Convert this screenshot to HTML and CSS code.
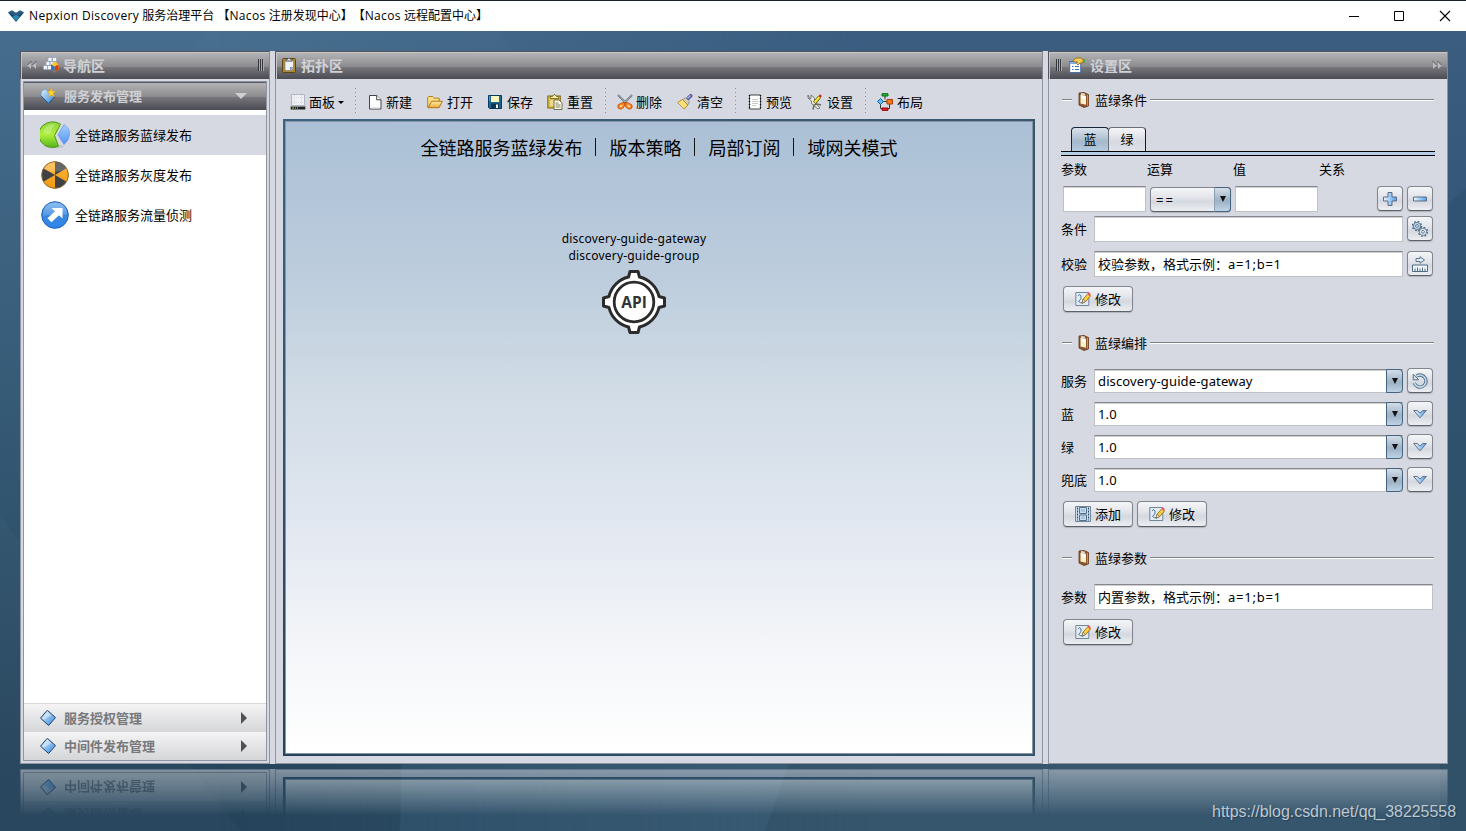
FILE: index.html
```html
<!DOCTYPE html>
<html lang="zh-CN">
<head>
<meta charset="utf-8">
<title>Nepxion Discovery 服务治理平台</title>
<link rel="stylesheet" href="styles.css">
</head>
<body>
<svg class="defs" width="0" height="0" aria-hidden="true">
  <defs>
    <linearGradient id="gBlue" x1="0" y1="0" x2="1" y2="1"><stop offset="0" stop-color="#e4f5ff"/><stop offset="1" stop-color="#2f86dc"/></linearGradient>
    <linearGradient id="gPale" x1="0" y1="0" x2="1" y2="0"><stop offset="0" stop-color="#eef7ff"/><stop offset="1" stop-color="#4f9ff0"/></linearGradient>
    <linearGradient id="gGreen" x1="0" y1="0" x2="0" y2="1"><stop offset="0" stop-color="#8ed33a"/><stop offset=".5" stop-color="#aef03c"/><stop offset="1" stop-color="#56b51c"/></linearGradient>
    <linearGradient id="gSlice" x1="0" y1="0" x2="0" y2="1"><stop offset="0" stop-color="#a9d2ff"/><stop offset="1" stop-color="#4f92f0"/></linearGradient>
    <linearGradient id="gBall" x1="0" y1="0" x2="0" y2="1"><stop offset="0" stop-color="#7db8f0"/><stop offset=".5" stop-color="#3b87de"/><stop offset="1" stop-color="#2f86ee"/></linearGradient>
    <linearGradient id="gGold" x1="0" y1="0" x2="0" y2="1"><stop offset="0" stop-color="#fff0a8"/><stop offset="1" stop-color="#e8a838"/></linearGradient>
    <linearGradient id="gOrange" x1="0" y1="0" x2="0" y2="1"><stop offset="0" stop-color="#ffb640"/><stop offset="1" stop-color="#f09a10"/></linearGradient>
    <symbol id="diamond" viewBox="0 0 16 16"><path d="M7.600.500 15.500 7.600 8.600 15.500.500 8.200 6.200 1.400z" fill="url(#gBlue)" stroke="#20406c" stroke-width="1"/><path d="M7.500 2 2 8l2 1.700L11.500 5z" fill="#fff" opacity=".4"/></symbol>
    <symbol id="star" viewBox="0 0 16 16"><path d="m5 1 3 2 6 5-5.500 7.500L.7 8 1.500 3.500z" fill="url(#gBlue)" stroke="#6f9cc4" stroke-width=".8"/><path d="M.7 7.500 8.500 15.400 15 8.500" fill="none" stroke="#254e86"/><path d="m11 0 1.300 3.200 3.400-.3-2.500 2.400 1.400 3.300-3.200-1.500L8.800 9l.5-3.500L7 3.400l3-.2z" fill="#ffd62e" stroke="#e49b14" stroke-width=".6"/></symbol>
    <symbol id="blocks" viewBox="0 0 16 16"><g fill="#f2f5fa" stroke="#8fa1bb" stroke-width=".7"><path d="M5 .5h4v4H5zM9.500.5h4v4h-4zM3 4.500h4v4H3zM7 4.500h4v4H7zM.5 8.500h4v4h-4zM4.500 8.500h4v4h-4z"/></g><path d="m8 7.500 4-3 3.500 3v5l-4 3-3.500-3z" fill="#ffc42e"/><path d="M11.700 9.500 15.500 7.500v5l-4 3z" fill="#d83c18"/><path d="m8 7.500 3.700 2-.2 6-3.500-3z" fill="#2f74c6"/></symbol>
    <symbol id="clip" viewBox="0 0 16 16"><rect x="1.500" y="1.500" width="13" height="14" rx="1" fill="#b08a32" stroke="#5c440f"/><path d="M4 4h8.500v7L10 13.500H4z" fill="#eef3fb" stroke="#6a7690" stroke-width=".6"/><path d="M12.500 10H9v3.500z" fill="#8595b8"/><path d="M5 4V2.200h1.700Q8-.5 9.300 2.200H11V4z" fill="#dfe3e8" stroke="#454b54" stroke-width=".8"/></symbol>
    <symbol id="props" viewBox="0 0 16 16"><rect x=".7" y="4.500" width="11" height="11" fill="#fff" stroke="#4a72a8"/><path d="M1 5h10.500v2H1z" fill="#7fb0e8"/><path d="M3 9.500h1.500m1.500 0h4M3 12.500h1.500m1.500 0h4" stroke="#3f75b4"/><path d="M3.500 4.200 7 1h5l2 1.500v3.200L11 6 9 8 7.500 6.500 8.500 5 6 5z" fill="#f7cb55" stroke="#8f6314" stroke-width=".8"/><path d="M14 2h2v4h-2z" fill="#54a24a"/></symbol>
    <symbol id="panel" viewBox="0 0 16 16"><path d="M1.500.5h13v11h-13z" fill="#eef0f3" stroke="#b0b5be"/><path d="M4.500 1v10M11.500 1v10M2 3.500h12M2 8.500h12" stroke="#d5d8de" stroke-dasharray="1 1"/><path d="M.7 12h14.600v3.500H.7z" fill="#222"/><path d="M1 12.500h14" stroke="#888"/><path d="M2 14h2" stroke="#9edc1a"/><path d="M5 14h4" stroke="#d0ce4c" stroke-dasharray="1 1"/></symbol>
    <symbol id="new" viewBox="0 0 16 16"><path d="M2.500 1.500h7.200l4.300 4.300v9.200H2.500z" fill="#fcfcfd" stroke="#444" stroke-linejoin="round"/><path d="M9.700 1.500v4.300H14" fill="#fff" stroke="#444"/><path d="M4 14h9" stroke="#d5d7dc"/></symbol>
    <symbol id="open" viewBox="0 0 16 16"><path d="M.7 13.500V3.500l1-1h4l1.500 1.700h5v3.500" fill="#ffdf86" stroke="#bc7b22"/><path d="M1 13.700 4.500 7.200h10.800l-3.200 6.500z" fill="url(#gGold)" stroke="#b57018"/></symbol>
    <symbol id="save" viewBox="0 0 16 16"><path d="M1.500 1.500h13v13h-12l-1-1z" fill="#1d6793" stroke="#073b62"/><path d="M4 2h8v6H4z" fill="#fbf7be"/><path d="M4 9.500h8V14H4z" fill="#0a344f"/><path d="M9 10.500h2V14H9z" fill="#f3f7f8"/><path d="M2.500 2v5" stroke="#3fa1c9"/></symbol>
    <symbol id="paste" viewBox="0 0 16 16"><rect x=".8" y="2" width="12.500" height="12" fill="#d9bd48" stroke="#806615"/><path d="M3.500 4.500V2.500h2L7 .6h1l1.500 1.900h2v2z" fill="#f7f2a6" stroke="#665c1b" stroke-width=".8"/><path d="M3 6h8v6H3z" fill="#ecdb85"/><path d="M7 6h5l3 2.800v6.700H7z" fill="#fffbe5" stroke="#58512f" stroke-width=".8"/><path d="M8.500 9h3m-3 2h5m-5 2h5" stroke="#61604f" stroke-width=".8"/></symbol>
    <symbol id="cut" viewBox="0 0 16 16"><path d="m1 1 10 10M15 1 5 11" stroke="#687681" stroke-width="2"/><path d="m1.500 1 8.500 9M14.500 1 6 10" stroke="#d5dde2" stroke-width=".6"/><path d="M8 8.500 4.500 9 1 11v3l3 1.200 3-2zM8 8.500l3.500.5 3.500 2v3l-3 1.200-3-2z" fill="#ff8b20" stroke="#b94508" stroke-width=".8"/><path d="m3 12.500 2.300-.8m7.700.8-2.300-.8" stroke="#fff" stroke-width="1.200"/></symbol>
    <symbol id="broom" viewBox="0 0 16 16"><path d="m11 4.500 2.700-2.700" stroke="#555a9d" stroke-width="3.600" stroke-linecap="round"/><path d="m10.500 4.500 3-3" stroke="#aab0ea" stroke-width="1.400"/><path d="M5.500 5.800 8.500 3.700l4 4-1.600 3.200z" fill="#d5cfbc" stroke="#777" stroke-width=".7"/><path d="M5.500 5.500.6 8.500l6.600 6.500 3.700-4z" fill="#f8db66" stroke="#a17b23" stroke-width=".8"/><path d="m2 8.500 5 5m-2.500-6.500 4.500 4.500" stroke="#fff7be" stroke-width=".8"/></symbol>
    <symbol id="preview" viewBox="0 0 16 16"><path d="M2.500 1h11v14h-11z" fill="#fff" stroke="#444"/><path d="M2.500 1v14M13.500 1v14" stroke="#111" stroke-width="1.500" stroke-dasharray="1 2"/><path d="M5 5.500h6M5 7.500h6M5 9.500h6M5 11.500h4" stroke="#bbb" stroke-width=".8"/></symbol>
    <symbol id="tools" viewBox="0 0 16 16"><path d="M1 1v3l3.500 3v2.500L11 15l2-1-5.500-6V4L4 1v3L3 5z" fill="#e4e5df" stroke="#63635d" stroke-width=".8"/><path d="m6 15.500 1-4.500 3-1 4 1" fill="none" stroke="#6e6d60" stroke-width="1.500"/><path d="m7.500 8.800 5-6" stroke="#5e5528" stroke-width="3.500"/><path d="m7.700 8.500 5-6" stroke="#ffed28" stroke-width="2"/><path d="m12.300 3 1.700-1.800" stroke="#bc281e" stroke-width="2.500"/></symbol>
    <symbol id="layout" viewBox="0 0 16 18"><path d="M8 3v3.500M3.500 11v4.500h9V11M6 8.500h4" fill="none" stroke="#333"/><path d="M5 .7h6v2.300H5z" fill="#21bc36" stroke="#086d16"/><path d="m3.500 5.500 3 3-3 3-3-3z" fill="#61bbf5" stroke="#1663a9"/><path d="M10 6.500h5.500v4.500H10z" fill="#ff7b18" stroke="#a83c06"/><path d="M5 15h6v2.300H5z" fill="#e92228" stroke="#900"/></symbol>
    <symbol id="book" viewBox="0 0 12 16"><path d="m1 1 5-.5 4.500 2v11.500L6 15.500 1 13z" fill="#8e572c" stroke="#633619" stroke-width=".8"/><path d="m2.500 2.800 5.500 1v9L2.500 11.500z" fill="#fff0c5"/><path d="m3.500 3.500 3.500.7v3L3.500 6z" fill="#fff"/><path d="m3 1 4 .5v2L3 3z" fill="#ddd7cf"/><path d="m9.500 2.800.1 10.900" stroke="#c89564"/></symbol>
    <symbol id="edit" viewBox="0 0 16 16"><path d="M.8 1.500h13v13H.8z" fill="#e1ecf5" stroke="#71879c"/><path d="M3 5q2-3 3 0T3.500 10.500q2 2 5 1" fill="none" stroke="#54779b" stroke-width="1"/><path d="m7 12.300 1-4L13 2.500l2.700 2.300-5.200 6z" fill="#ffcf38" stroke="#8b6520" stroke-width=".8"/><path d="m8.300 8.300 2.300 2L7 12.300z" fill="#fff2c6" stroke="#555" stroke-width=".6"/><path d="m12.300 3 1.500-1.700 2 1.800-1.300 1.800z" fill="#ee5960"/></symbol>
    <symbol id="film" viewBox="0 0 16 16"><path d="M.5.5h15v15H.5z" fill="#c9dceb" stroke="#71879c"/><path d="M2.500 1.500v13M13.500 1.500v13" stroke="#334c66" stroke-dasharray="2 1"/><path d="M4.500 1.500h7v6h-7zM4.500 9h7v5.500h-7z" fill="#c8deef" stroke="#55708a"/><path d="M6 3h4v3H6zM6 10.500h4v2.500H6z" fill="#a5c4de"/></symbol>
    <symbol id="plus" viewBox="0 0 16 16"><path d="M6 1.500h4V6h4.500v4H10v4.500H6V10H1.500V6H6z" fill="url(#gPale)" stroke="#5d6c80"/></symbol>
    <symbol id="minus" viewBox="0 0 16 16"><path d="M1.500 6h13v4h-13z" fill="url(#gPale)" stroke="#5d6c80"/></symbol>
    <symbol id="gears" viewBox="0 0 16 16"><g stroke="#4f6a84"><circle cx="5" cy="5" r="4.500" fill="none" stroke-width="1.400" stroke-dasharray="1.800 1.730"/><circle cx="5" cy="5" r="3.600" fill="#bcd8ee" stroke-width=".8"/><circle cx="5" cy="5" r="1.400" fill="#fff" stroke-width=".9"/><circle cx="11" cy="10.800" r="4.500" fill="none" stroke-width="1.400" stroke-dasharray="1.800 1.730"/><circle cx="11" cy="10.800" r="3.600" fill="#e8eff5" stroke-width=".8"/><circle cx="11" cy="10.800" r="1.400" fill="#fff" stroke-width=".9"/></g></symbol>
    <symbol id="ruler" viewBox="0 0 16 16"><path d="M.5 9h15v6.500H.5z" fill="#eef5fb" stroke="#506b84"/><path d="M3 15v-2.500M5.500 15v-3.500M8 15v-2.500M10.500 15v-3.500M13 15v-2.500" stroke="#506b84"/><path d="M4 2.500h4V.7L12.500 4 8 7.300V5.500H4z" fill="#dcebf5" stroke="#506b84" stroke-width=".9"/></symbol>
    <symbol id="undo" viewBox="0 0 16 16"><path d="M4.500 3.200A6 6 0 1 1 2.300 10" fill="none" stroke="#54708b" stroke-width="3.400"/><path d="M4.500 3.200A6 6 0 1 1 2.300 10" fill="none" stroke="#c5dced" stroke-width="1.600"/><path d="M1.200 1.300v5.500h5.500z" fill="#d7e8f4" stroke="#54708b"/></symbol>
    <symbol id="chev" viewBox="0 0 14 10"><path d="M.7 1.500h3.500L7 4l2.800-2.500h3.500L7 8.800z" fill="url(#gPale)" stroke="#5e7288"/></symbol>
    <symbol id="dbl" viewBox="0 0 10 8"><path d="M1 0v8l4-4zM6 0v8l4-4z" fill="#bdbdc1"/><path d="m.5 0 4 4M5.500 0l4 4" fill="none" stroke="#4d4e55"/></symbol>
  </defs>
</svg>

<header class="titlebar">
  <svg class="logo" viewBox="0 0 16 12"><path d="M0 2.500 4 .5 8 3l4-2.500 4 2L8 12z" fill="#14476b"/><path d="M0 2.500 4 .5 8 3l4-2.500 4 2-8 4z" fill="#2a5c84"/><path d="m4 7 4-2.200L12 7l-4 4z" fill="#2f87ad"/></svg>
  <div class="title"><span class="title-latin">Nepxion Discovery</span> 服务治理平台 【<span>Nacos</span> 注册发现中心】【<span>Nacos</span> 远程配置中心】</div>
  <svg class="winctl" viewBox="0 0 102 12"><path d="M0 6.500h10M45.500 1.500h9v9h-9z" fill="none" stroke="#000"/><path d="m91 1 10 10m0-10-10 10" stroke="#000" stroke-width="1.100"/></svg>
</header>

<main class="desktop">
  <svg class="wall" viewBox="0 31 1466 800" preserveAspectRatio="none">
    <path d="M205 31H498L540 90H170z" fill="#fff" opacity=".015"/>
    <path d="M0 515 240 831H0z" fill="#fff" opacity=".02"/>
    <path d="M402 760H790L765 831H400z" fill="#6f9cc4" opacity=".1"/>
    <path d="M1466 188V831H1440V212z" fill="#0b2b49" opacity=".1"/>
  </svg>
  <div class="frames">
    <section class="frame nav">
      <div class="bar">
        <svg class="dbl flip" viewBox="0 0 10 8"><use href="#dbl"/></svg>
        <svg class="i16"><use href="#blocks"/></svg><b>导航区</b><i class="grip"></i>
      </div>
      <div class="navbox">
        <div class="group on"><svg class="i16"><use href="#star"/></svg><b>服务发布管理</b><i class="down"></i></div>
        <div class="items">
          <div class="item sel"><svg viewBox="0 0 30 28"><ellipse cx="14" cy="25.500" rx="10" ry="2" fill="#9a9ea8" opacity=".3"/><path d="M14.500 14.500 20.500 3.200A13.800 12.800 0 1 0 18.500 25.200z" fill="url(#gGreen)" stroke="#4c9a14"/><path d="M3 11Q5 3 16 2.500q-5 5-5 9-4 3-8-.5" fill="#fff" opacity=".25"/><path d="m18 14 6-10.500Q29.500 7 29.500 13T24 23.500z" fill="url(#gSlice)" stroke="#6d9be4" stroke-width=".8"/></svg>全链路服务蓝绿发布</div>
          <div class="item"><svg viewBox="0 0 30 28"><circle cx="15" cy="14" r="13.500" fill="#404144"/><path d="M15 14 3.300 7.200A13.500 13.500 0 0 1 15 .5zM15 14 26.700 7.200A13.500 13.500 0 0 1 26.700 20.700zM15 14v13.500A13.500 13.500 0 0 1 3.300 20.700z" fill="url(#gOrange)"/><path d="M3 8Q8 1 15 1t12 7q-12 6-24 0" fill="#fff" opacity=".2"/><circle cx="15" cy="14" r="13.300" fill="none" stroke="#8d6a30" stroke-width=".8"/></svg>全链路服务灰度发布</div>
          <div class="item"><svg viewBox="0 0 30 28"><circle cx="15" cy="14" r="13.300" fill="url(#gBall)" stroke="#1e61b8"/><path d="M3 15Q3 2 15 2t12 12Q14 12 3 15" fill="#fff" opacity=".15"/><path d="M11.500 7h11v10.500L19 14.300l-7.500 7-4-4L15 10.200z" fill="#fff"/></svg>全链路服务流量侦测</div>
        </div>
        <div class="group off"><svg class="i16"><use href="#diamond"/></svg><b>服务授权管理</b><i class="right"></i></div>
        <div class="group off"><svg class="i16"><use href="#diamond"/></svg><b>中间件发布管理</b><i class="right"></i></div>
      </div>
    </section>

    <section class="frame topo">
      <div class="bar"><svg class="i16"><use href="#clip"/></svg><b>拓扑区</b></div>
      <div class="toolbar">
        <div class="tool first"><svg><use href="#panel"/></svg><span>面板</span><i class="caret"></i></div>
        <i class="sep"></i>
        <div class="tool"><svg><use href="#new"/></svg><span>新建</span></div>
        <div class="tool wide"><svg><use href="#open"/></svg><span>打开</span></div>
        <div class="tool wide"><svg><use href="#save"/></svg><span>保存</span></div>
        <div class="tool last wide"><svg><use href="#paste"/></svg><span>重置</span></div>
        <i class="sep"></i>
        <div class="tool"><svg><use href="#cut"/></svg><span>删除</span></div>
        <div class="tool last wide"><svg><use href="#broom"/></svg><span>清空</span></div>
        <i class="sep"></i>
        <div class="tool"><svg><use href="#preview"/></svg><span>预览</span></div>
        <div class="tool last wide"><svg><use href="#tools"/></svg><span>设置</span></div>
        <i class="sep"></i>
        <div class="tool last wide"><svg class="tall"><use href="#layout"/></svg><span>布局</span></div>
      </div>
      <div class="canvas-edge"><div class="canvas">
        <div class="heading"><span>全链路服务蓝绿发布</span><i></i><span>版本策略</span><i></i><span>局部订阅</span><i></i><span>域网关模式</span></div>
        <div class="node">
          <div>discovery-guide-gateway</div><div class="grp">discovery-guide-group</div>
          <svg viewBox="0 0 64 64"><path d="M28 1.500h8l1.500 5.500A26 26 0 0 1 57 26.500l5.500 1.500v8L57 37.500A26 26 0 0 1 37.500 57L36 62.500h-8L26.500 57A26 26 0 0 1 7 37.500L1.500 36v-8L7 26.500A26 26 0 0 1 26.500 7z" fill="#fff" stroke="#2b2b2b" stroke-width="3" stroke-linejoin="round"/><circle cx="32" cy="32" r="19.800" fill="#fff" stroke="#2b2b2b" stroke-width="2.800"/><text x="32" y="37.500" text-anchor="middle" class="api">API</text></svg>
        </div>
      </div></div>
    </section>

    <section class="frame conf">
      <div class="bar"><i class="grip"></i><svg class="i16"><use href="#props"/></svg><b>设置区</b><svg class="dbl" viewBox="0 0 10 8"><use href="#dbl"/></svg></div>
      <div class="form">
        <div class="legend"><i class="dash"></i><svg><use href="#book"/></svg><span>蓝绿条件</span><i class="rule"></i></div>
        <div class="tabs"><span class="tab act">蓝</span><span class="tab">绿</span></div>
        <div class="tabline"></div>
        <div class="cols"><span>参数</span><span>运算</span><span>值</span><span>关系</span></div>
        <div class="row r1">
          <div class="input w83"></div>
          <div class="select"><span>==</span><i class="arrow"></i></div>
          <div class="input w83"></div>
          <div class="sq push"><svg><use href="#plus"/></svg></div>
          <div class="sq"><svg><use href="#minus"/></svg></div>
        </div>
        <div class="row r2"><label>条件</label><div class="input"></div><div class="sq"><svg><use href="#gears"/></svg></div></div>
        <div class="row r3"><label>校验</label><div class="input">校验参数，格式示例：<span class="lat">a=1;b=1</span></div><div class="sq"><svg><use href="#ruler"/></svg></div></div>
        <div class="btns"><div class="btn"><svg><use href="#edit"/></svg>修改</div></div>

        <div class="legend l2"><i class="dash"></i><svg><use href="#book"/></svg><span>蓝绿编排</span><i class="rule"></i></div>
        <div class="row c first-c"><label>服务</label><div class="combo"><span class="dg">discovery-guide-gateway</span><i class="arrow"></i></div><div class="sq"><svg><use href="#undo"/></svg></div></div>
        <div class="row c"><label>蓝</label><div class="combo"><span>1.0</span><i class="arrow"></i></div><div class="sq"><svg class="chev"><use href="#chev"/></svg></div></div>
        <div class="row c"><label>绿</label><div class="combo"><span>1.0</span><i class="arrow"></i></div><div class="sq"><svg class="chev"><use href="#chev"/></svg></div></div>
        <div class="row c"><label>兜底</label><div class="combo"><span>1.0</span><i class="arrow"></i></div><div class="sq"><svg class="chev"><use href="#chev"/></svg></div></div>
        <div class="btns b2"><div class="btn"><svg><use href="#film"/></svg>添加</div><div class="btn"><svg><use href="#edit"/></svg>修改</div></div>

        <div class="legend l3"><i class="dash"></i><svg><use href="#book"/></svg><span>蓝绿参数</span><i class="rule"></i></div>
        <div class="row r5"><label>参数</label><div class="input">内置参数，格式示例：<span class="lat">a=1;b=1</span></div></div>
        <div class="btns"><div class="btn"><svg><use href="#edit"/></svg>修改</div></div>
      </div>
    </section>
  </div>

  <div class="mirror" aria-hidden="true">
    <div class="mirror-in">
      <section class="frame nav"><div class="navbox">
        <div class="group off"><svg class="i16"><use href="#diamond"/></svg><b>服务授权管理</b><i class="right"></i></div>
        <div class="group off"><svg class="i16"><use href="#diamond"/></svg><b>中间件发布管理</b><i class="right"></i></div>
      </div></section>
      <section class="frame topo"><div class="canvas-edge"><div class="canvas"></div></div></section>
      <section class="frame conf"></section>
    </div>
  </div>
  <div class="watermark">https://blog.csdn.net/qq_38225558</div>
</main>
</body>
</html>
```

FILE: styles.css
```css
* { box-sizing: border-box; }
html, body { margin: 0; height: 831px; overflow: hidden; }
body {
  display: flex;
  flex-direction: column;
  width: 1466px;
  font: 13px/16px "Noto Sans", "Noto Sans CJK SC", sans-serif;
  color: #000;
}
i { font-style: normal; display: block; flex: none; }
svg { display: block; flex: none; }
.defs { position: absolute; }

/* window title */
.titlebar {
  display: flex;
  align-items: center;
  height: 31px;
  padding: 0 15px 1px 8px;
  border-top: 1px solid #1b222c;
  background: #fff;
}
.logo { width: 16px; height: 12px; margin-right: 5px; }
.title { flex: 1; font: 12px/18px "Open Sans", "Noto Sans CJK SC", sans-serif; white-space: nowrap; text-spacing-trim: space-all; }
.title span { letter-spacing: .35px; }
.winctl { width: 102px; height: 12px; }

/* desktop */
.desktop {
  position: relative;
  display: flex;
  flex-direction: column;
  height: 800px;
  padding: 20px 18px 0 20px;
  background: linear-gradient(#466d8e 0%, #365b77 45%, #25445b 95%);
}
.desktop::before {
  content: "";
  position: absolute;
  inset: 0;
  background: linear-gradient(#3a5d80 0%, #35587a 22%, #34566f 60%, #36566d 100%);
  -webkit-mask-image: linear-gradient(90deg, transparent 15%, #000 60%);
  mask-image: linear-gradient(90deg, transparent 15%, #000 60%);
}
.wall { position: absolute; left: 0; top: 0; width: 1466px; height: 800px; }
.frames { position: relative; display: flex; gap: 5px; height: 713px; background: #d6d9e1; }
.frame { display: flex; flex-direction: column; background: #d6d9e1; border: 1px solid #9095a2; }
.frames .frame { border-top: 0; }
.nav { width: 250px; }
.topo { width: 768px; }
.conf { width: 400px; }

.bar {
  display: flex;
  align-items: center;
  height: 28px;
  flex: none;
  margin: 0 -1px;
  border: 1px solid #53545d;
  border-right-color: #878891;
  border-bottom: 0;
  box-shadow: inset 1px 1px #c7c7ca;
  background: linear-gradient(#b6b6b8 0, #8b8b8f 55%, #77777c 56%, #4b4b54 100%);
  color: #d0d1d5;
}
.bar b { font: bold 14px/20px "Noto Sans CJK SC", sans-serif; padding-bottom: 1px; }
.i16 { width: 16px; height: 16px; }
.dbl { width: 10px; height: 8px; margin-bottom: 1px; }
.flip { transform: scaleX(-1); }
.grip {
  width: 6px;
  height: 12px;
  margin-bottom: 2px;
  background: repeating-linear-gradient(90deg, #35363c 0 1px, #aaaab0 1px 2px);
}
.bar .i16 { margin-bottom: 2px !important; }
.nav .bar { padding: 0 5px 0 6px; }
.nav .bar .i16 { margin: 0 4px 0 6px; }
.nav .bar .grip { margin-left: auto; }
.topo .bar { padding-left: 5px; }
.topo .bar .i16 { margin-right: 4px; }
.conf .bar { padding: 0 5px 0 7px; }
.conf .bar .i16 { margin: 0 5px 0 7px; }
.conf .bar .dbl { margin-left: auto; }

.navbox {
  display: flex;
  flex-direction: column;
  flex: 1;
  margin: 2px;
  border: 1px solid #9093a0;
  background: #fff;
}
.group { display: flex; align-items: center; height: 28px; flex: none; padding: 0 19px 0 16px; }
.group b { flex: 1; margin-left: 8px; font: bold 13px/20px "Noto Sans CJK SC", sans-serif; }
.group.on {
  height: 28px;
  padding-bottom: 2px;
  border-top: 1px solid #555762;
  background: linear-gradient(#b4b4b6, #8b8b8f 50%, #77777c 51%, #4b4b54);
  color: #cfd0d4;
}
.group.off { background: linear-gradient(#f4f4f5, #d5d6d8); color: #77787b; }
.items + .group { border-top: 1px solid #d9dadc; height: 29px; }
.down { border: 6px solid transparent; border-top-color: #cfcfd2; border-bottom: 0; }
.right { border: 6px solid transparent; border-left: 6px solid #515154; border-right: 0; }
.items { flex: 1; padding-top: 5px; }
.item { display: flex; align-items: center; height: 40px; padding-left: 16px; }
.item.sel { background: #d6d9e1; }
.item svg { width: 30px; height: 28px; margin-right: 5px; }

/* topology */
.toolbar { display: flex; align-items: center; height: 40px; flex: none; padding: 6px 0 0 14px; }
.tool { display: flex; align-items: center; width: 60px; }
.tool.last { width: 50px; }
.tool.first { width: 57px; }
.tool svg { width: 16px; height: 16px; margin-right: 3px; }
.tool.wide svg { margin-right: 4px; }
.tool span { padding-bottom: 1px; }
.tool .tall { height: 18px; }
.caret { margin-left: 3px; border: 3px solid transparent; border-top-color: #000; border-bottom: 0; }
.sep { width: 1px; height: 28px; margin: 0 11px 0 8px; background: repeating-linear-gradient(#8b8e98 0 1px, transparent 1px 4px); }
.canvas-edge {
  flex: 1;
  margin: 0 7px 7px;
  padding: 2px;
  background: linear-gradient(#3d6384, #25445b);
}
.frames .canvas-edge { background: linear-gradient(90deg, transparent, #35576d), linear-gradient(#3d6384, #25445b); }
.canvas {
  height: 100%;
  border: 1px solid #8b94a1;
  background: linear-gradient(#abc0d6 0, #bdcddd 25%, #d1dce6 43%, #e0e6f0 62%, #f3f5f8 82%, #fff 100%);
}
.heading { display: flex; align-items: center; justify-content: center; height: 24px; margin-top: 13px; font: 18px/24px "Noto Sans CJK SC", sans-serif; }
.heading i { width: 1px; height: 18px; margin: 0 14px 0 12px; background: #111; }
.node { display: flex; flex-direction: column; align-items: center; margin: 71px 0 0 -50px; font-size: 12px; line-height: 17px; }
.node div { letter-spacing: .2px; }
.node svg { width: 64px; height: 64px; margin-top: 6px; }
.api { font: bold 15.5px "Open Sans", sans-serif; fill: #333; }

/* settings */
.form { display: flex; flex-direction: column; padding-left: 13px; width: 385px; }
.legend { display: flex; align-items: center; height: 20px; margin-top: 11px; }
.legend svg { width: 12px; height: 16px; margin: 0 5px 0 6px; }
.legend span { padding-bottom: 1px; }
.dash, .rule { height: 2px; border-top: 1px solid #818287; background: #fff; }
.dash { width: 10px; }
.rule { flex: 1; margin-left: 3px; }
.tabs { display: flex; height: 24px; margin: 17px 0 0 9px; }
.tab {
  width: 38px;
  height: 24px;
  margin-right: -1px;
  border: 1px solid #696d76;
  border-right-color: #111827;
  border-bottom: 0;
  border-radius: 4px 4px 0 0;
  background: linear-gradient(#f5f6f9, #d7d9e1 60%, #dfe1e8);
  text-align: center;
  line-height: 23px;
}
.tab.act { border-color: #14263a; background: linear-gradient(#dbe3eb, #a5b9cb 60%, #b5cbdf); }
.tabline { width: 374px; height: 5px; margin-left: -1px; border: solid #000; border-width: 1px 0; background: #b4cde5; }
.cols { display: flex; height: 20px; margin: 3px 0 0 -1px; align-items: center; }
.cols span { width: 86px; }
.row { display: flex; align-items: center; gap: 4px; width: 371px; height: 26px; }
.r1 { margin-top: 7px; padding-left: 1px; }
.r2 { margin-top: 4px; }
.r3 { margin-top: 9px; }
.row label { width: 28px; margin-left: -1px; margin-right: 1px; white-space: nowrap; }
.input {
  flex: 1;
  height: 26px;
  padding-left: 3px;
  border: 1px solid #bfc1c6;
  border-top: 1px solid #85878c;
  box-shadow: inset 0 1px #cfd0d2;
  background: #fff;
  line-height: 24px;
  white-space: nowrap;
}
.input.w83 { flex: none; width: 83px; }
.lat { letter-spacing: .75px; }
.sq, .btn, .select {
  border: 1px solid #82868f;
  border-bottom-color: #5c6068;
  border-radius: 4px;
  background: linear-gradient(#f5f6f8, #e3e5ea 40%, #d5d8df 60%, #eceef2);
  box-shadow: 0 1px 1px rgba(60,65,75,.25);
}
.sq { display: flex; align-items: center; justify-content: center; width: 26px; height: 25px; flex: none; margin-bottom: 1px; }
.sq.push { margin-left: auto; }
.sq svg { width: 16px; height: 16px; }
.sq .chev { width: 14px; height: 10px; }
.select { display: flex; width: 81px; height: 25px; }
.select span { flex: 1; padding-left: 5px; line-height: 25px; letter-spacing: 2px; }
.arrow {
  display: flex;
  align-items: center;
  justify-content: center;
  width: 16px;
  border: 1px solid #45647f;
  border-radius: 0 4px 4px 0;
  background: linear-gradient(#d4dee8, #a2b5c7 50%, #9fb4c7 60%, #bed3e5);
}
.select .arrow { margin: -1px; border-left-color: #8ca0b2; width: 17px; }
.arrow::before { content: ""; border: 3.5px solid transparent; border-top: 6px solid #111; border-bottom: 0; }
.btns { display: flex; gap: 4px; margin: 9px 0 0 1px; }
.btn { display: flex; align-items: center; width: 70px; height: 26px; padding: 0 0 1px 11px; }
.btn svg { width: 16px; height: 16px; margin-right: 4px; }
.l2 { margin-top: 21px; }
.first-c { margin-top: 15px; }
.row.c { margin-bottom: 7px; }
.combo { display: flex; flex: 1; height: 24px; margin-bottom: 1px; background: #fff; border: 1px solid #bfc1c6; border-top-color: #85878c; box-shadow: inset 0 1px #cfd0d2; }
.combo span { flex: 1; padding-left: 3px; line-height: 23px; letter-spacing: .13px; }
.combo .arrow { margin: -1px; width: 17px; }
.b2 { margin-top: 1px; }
.l3 { margin-top: 21px; }
.r5 { margin-top: 16px; }

/* floor reflection */
.mirror {
  position: relative;
  display: flex;
  flex-direction: column;
  height: 45px;
  margin-top: 5px;
  overflow: hidden;
  -webkit-mask-image: linear-gradient(rgba(0,0,0,.52), rgba(0,0,0,.02));
  mask-image: linear-gradient(rgba(0,0,0,.52), rgba(0,0,0,.02));
}
.mirror-in { display: flex; flex: none; gap: 5px; height: 61px; background: #d6d9e1; transform: scaleY(-1); }
.mirror-in .frame { border-top: 0; }
.mirror-in .navbox { justify-content: flex-end; margin-top: 0; border-top: 0; }
.mirror-in .canvas-edge { padding-top: 0; }
.mirror-in .canvas { border-top: 0; background: #fff; }

.watermark {
  position: absolute;
  right: 10px;
  bottom: 9px;
  font: 16px/20px "Liberation Sans", Arial, sans-serif;
  letter-spacing: -.05px;
  color: #bdc8d1;
  text-shadow: 1px 1px 1px rgba(20,40,60,.5);
}
```
